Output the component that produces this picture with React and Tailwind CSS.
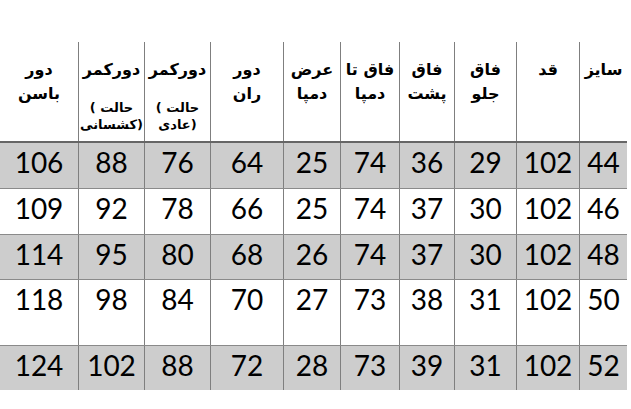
const widths = ['w-[48px]', 'w-[63px]', 'w-[62px]', 'w-[55px]', 'w-[59px]', 'w-[57px]', 'w-[73px]', 'w-[66px]', 'w-[66px]', 'w-[78px]'];

// columns listed from right to left (rtl)
const headers = [
  { main: ['سایز'] },
  { main: ['قد'] },
  { main: ['فاق', 'جلو'] },
  { main: ['فاق', 'پشت'] },
  { main: ['فاق تا', 'دمپا'] },
  { main: ['عرض', 'دمپا'] },
  { main: ['دور', 'ران'] },
  { main: ['دورکمر'], sub: ['حالت )', '(عادی'] },
  { main: ['دورکمر'], sub: ['حالت )', '(کشسانی'] },
  { main: ['دور', 'باسن'] },
];

const rows = [
  { gray: true, h: 'h-[47px]', top: 'border-t-2 border-[#666666]', cells: [44, 102, 29, 36, 74, 25, 64, 76, 88, 106] },
  { gray: false, h: 'h-[46px]', top: 'border-t border-[#8a8a8a]', cells: [46, 102, 30, 37, 74, 25, 66, 78, 92, 109] },
  { gray: true, h: 'h-[45px]', top: 'border-t border-[#8a8a8a]', cells: [48, 102, 30, 37, 74, 26, 68, 80, 95, 114] },
  { gray: false, h: 'h-[66px]', top: 'border-t border-[#8a8a8a]', cells: [50, 102, 31, 38, 73, 27, 70, 84, 98, 118] },
  { gray: true, h: 'h-[45px]', top: 'border-t border-[#8a8a8a]', cells: [52, 102, 31, 39, 73, 28, 72, 88, 102, 124] },
];

function Cell({ i, children, className = '' }) {
  const last = i === widths.length - 1;
  return (
    <div className={`${widths[i]} shrink-0 h-full flex flex-col items-center ${last ? '' : 'border-l border-[#7f7f7f]'} ${className}`}>
      {children}
    </div>
  );
}

export default function App() {
  return (
    <div className="w-[631px] h-[409px] bg-white overflow-hidden">
      <div dir="rtl" className="w-[627px]">
        <div className="h-[42px]" />
        <div className="flex h-[99px] font-['DejaVu_Sans',sans-serif] font-bold text-black">
          {headers.map((h, i) => (
            <Cell key={i} i={i} className="pt-[16px] text-center">
              {h.main.map((t, j) => (
                <div key={j} className="text-[16px] leading-[24px] whitespace-nowrap">{t}</div>
              ))}
              {h.sub && (
                <div className="mt-[17px]">
                  {h.sub.map((t, j) => (
                    <div key={j} className="text-[13px] leading-[17px] whitespace-nowrap">{t}</div>
                  ))}
                </div>
              )}
            </Cell>
          ))}
        </div>
        {rows.map((r, k) => (
          <div key={k} className={`flex ${r.h} ${r.top} ${r.gray ? 'bg-[#cdcdcd]' : 'bg-white'} font-['Lato',sans-serif] text-black`}>
            {r.cells.map((v, i) => (
              <Cell key={i} i={i} className="pt-[5px]">
                <span className="text-[28px] leading-[28px]">{v}</span>
              </Cell>
            ))}
          </div>
        ))}
      </div>
    </div>
  );
}
